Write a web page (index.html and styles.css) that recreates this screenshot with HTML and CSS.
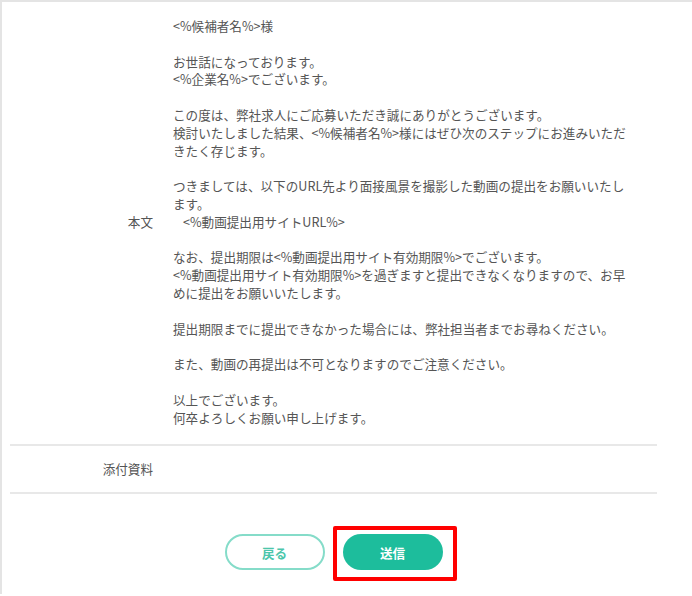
FILE: index.html
```html
<!DOCTYPE html>
<html lang="ja">
<head>
  <meta charset="UTF-8">
  <meta name="viewport" content="width=device-width, initial-scale=1.0">
  <title>メール送信確認</title>
  <link rel="stylesheet" href="styles.css">
</head>
<body>
  <div class="panel">
    <div class="form">
      <div class="row row-body">
        <div class="label">本文</div>
        <div class="value">
          <p>&lt;%候補者名%&gt;様</p>
          <p>お世話になっております。<br>&lt;%企業名%&gt;でございます。</p>
          <p>この度は、弊社求人にご応募いただき誠にありがとうございます。<br>検討いたしました結果、&lt;%候補者名%&gt;様にはぜひ次のステップにお進みいただきたく存じます。</p>
          <p>つきましては、以下のURL先より面接風景を撮影した動画の提出をお願いいたします。<br><span class="indent">&lt;%動画提出用サイトURL%&gt;</span></p>
          <p>なお、提出期限は&lt;%動画提出用サイト有効期限%&gt;でございます。<br>&lt;%動画提出用サイト有効期限%&gt;を過ぎますと提出できなくなりますので、お早めに提出をお願いいたします。</p>
          <p>提出期限までに提出できなかった場合には、弊社担当者までお尋ねください。</p>
          <p>また、動画の再提出は不可となりますのでご注意ください。</p>
          <p>以上でございます。<br>何卒よろしくお願い申し上げます。</p>
        </div>
      </div>
      <div class="row row-files">
        <div class="label">添付資料</div>
        <div class="value"></div>
      </div>
    </div>

    <div class="actions">
      <button class="btn btn-back">戻る</button>
      <button class="btn btn-send">送信<span class="highlight"></span></button>
    </div>
  </div>
</body>
</html>
```

FILE: styles.css
```css
:root {
  --text: #555;
  --line: #e8e8e8;
  --green: #1dbd9c;
  --green-light: #85dcc9;
}
body {
  margin: 0;
  font-family: "Noto Sans CJK JP", "Noto Sans", sans-serif;
  color: var(--text);
  background: #fff;
}
.panel {
  border-top: 2px solid #e4e4e4;
  border-left: 2px solid #e4e4e4;
  padding-left: 8px;
  height: 594px;
  box-sizing: border-box;
}
.form {
  width: 647px;
}
.row {
  display: flex;
  align-items: center;
  border-bottom: 2px solid var(--line);
}
.row-body {
  padding: 15px 0 18px;
}
.row-files {
  min-height: 46px;
}
.label {
  width: 143px;
  padding-right: 20px;
  flex-shrink: 0;
  text-align: right;
  font-size: 12.6px;
  line-height: 17.8px;
}
.value {
  width: 458px;
  font-size: 12.6px;
  line-height: 17.8px;
}
.value p {
  margin: 0 0 17.8px;
}
.value p:last-child {
  margin-bottom: 0;
}
.indent {
  padding-left: 10px;
}
.actions {
  width: 647px;
  display: flex;
  justify-content: center;
  gap: 18px;
  margin-top: 40px;
}
.btn {
  position: relative;
  width: 100px;
  height: 36px;
  border-radius: 18px;
  font-family: inherit;
  font-size: 12.6px;
  font-weight: bold;
  cursor: pointer;
  box-sizing: border-box;
}
.btn-back {
  background: #fff;
  border: 2px solid var(--green-light);
  color: #4cc6ab;
}
.btn-send {
  background: var(--green);
  border: none;
  color: #fff;
}
.highlight {
  position: absolute;
  top: -8px;
  left: -10px;
  right: -14px;
  bottom: -11px;
  border: 4px solid #f00;
  border-radius: 2px;
  pointer-events: none;
}
```
